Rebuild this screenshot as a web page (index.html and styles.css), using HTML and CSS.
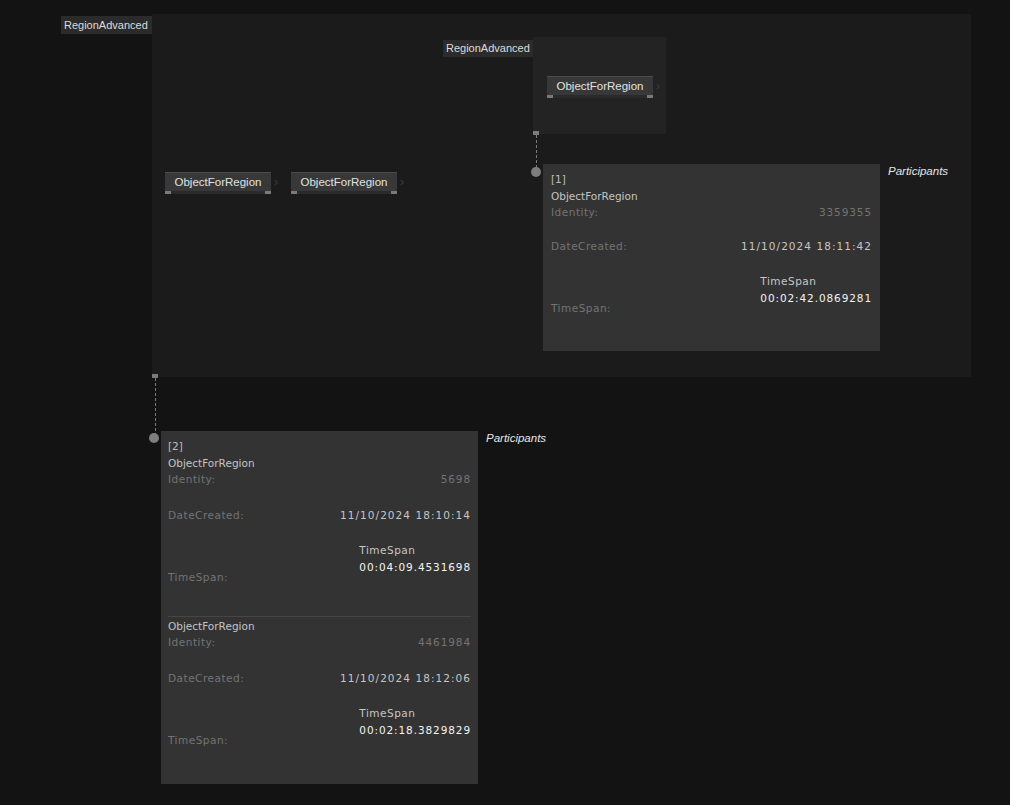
FILE: index.html
```html
<!DOCTYPE html>
<html lang="en">
<head>
    <meta charset="UTF-8">
    <meta name="viewport" content="width=device-width, initial-scale=1.0">
    <title>RegionAdvanced</title>
    <link rel="stylesheet" href="styles.css">
</head>
<body>
    <div class="canvas">
        <!-- outer region -->
        <div class="region region-outer"></div>
        <div class="region-label label-outer">RegionAdvanced</div>

        <!-- inner region -->
        <div class="region region-inner"></div>
        <div class="region-label label-inner">RegionAdvanced</div>

        <div class="node node-a">
            <span class="node-title">ObjectForRegion</span>
            <span class="node-foot"><i></i><i></i></span>
        </div>
        <span class="chevron chev-a">›</span>

        <div class="node node-b">
            <span class="node-title">ObjectForRegion</span>
            <span class="node-foot"><i></i><i></i></span>
        </div>
        <span class="chevron chev-b">›</span>

        <div class="node node-c">
            <span class="node-title">ObjectForRegion</span>
            <span class="node-foot"><i></i><i></i></span>
        </div>
        <span class="chevron chev-c">›</span>

        <!-- wires -->
        <svg class="wires" width="1010" height="805" viewBox="0 0 1010 805">
            <rect x="533" y="131" width="6" height="4" fill="#7a7a7a"/>
            <line x1="536.5" y1="135" x2="536.5" y2="168" stroke="#7a7a7a" stroke-width="1" stroke-dasharray="3 2"/>
            <circle cx="536" cy="172" r="5" fill="#7e7e7e"/>

            <rect x="152" y="374" width="6" height="4" fill="#7a7a7a"/>
            <line x1="155.5" y1="378" x2="155.5" y2="434" stroke="#7a7a7a" stroke-width="1" stroke-dasharray="3 2"/>
            <circle cx="154" cy="438" r="5" fill="#7e7e7e"/>
        </svg>

        <!-- participants 1 -->
        <div class="panel panel-1">
            <div class="record">
                <div class="index">[1]</div>
                <div class="title">ObjectForRegion</div>
                <div class="field">
                    <span class="key">Identity:</span>
                    <span class="val dim">3359355</span>
                </div>
                <div class="field">
                    <span class="key">DateCreated:</span>
                    <span class="val">11/10/2024 18:11:42</span>
                </div>
                <div class="field span-field">
                    <span class="key">TimeSpan:</span>
                    <span class="span-box">
                        <span class="span-type">TimeSpan</span>
                        <span class="span-val">00:02:42.0869281</span>
                    </span>
                </div>
            </div>
        </div>
        <div class="caption cap-1">Participants</div>

        <!-- participants 2 -->
        <div class="panel panel-2">
            <div class="record">
                <div class="index">[2]</div>
                <div class="title">ObjectForRegion</div>
                <div class="field">
                    <span class="key">Identity:</span>
                    <span class="val dim">5698</span>
                </div>
                <div class="field">
                    <span class="key">DateCreated:</span>
                    <span class="val">11/10/2024 18:10:14</span>
                </div>
                <div class="field span-field">
                    <span class="key">TimeSpan:</span>
                    <span class="span-box">
                        <span class="span-type">TimeSpan</span>
                        <span class="span-val">00:04:09.4531698</span>
                    </span>
                </div>
            </div>
            <div class="record">
                <div class="title">ObjectForRegion</div>
                <div class="field">
                    <span class="key">Identity:</span>
                    <span class="val dim">4461984</span>
                </div>
                <div class="field">
                    <span class="key">DateCreated:</span>
                    <span class="val">11/10/2024 18:12:06</span>
                </div>
                <div class="field span-field">
                    <span class="key">TimeSpan:</span>
                    <span class="span-box">
                        <span class="span-type">TimeSpan</span>
                        <span class="span-val">00:02:18.3829829</span>
                    </span>
                </div>
            </div>
        </div>
        <div class="caption cap-2">Participants</div>
    </div>
</body>
</html>
```

FILE: styles.css
```css
body, html {
    margin: 0;
    padding: 0;
    height: 100%;
    overflow: hidden;
    background-color: #131313;
}

.canvas {
    position: relative;
    width: 1010px;
    height: 805px;
    font-family: "Liberation Sans", Arial, sans-serif;
}

/* regions */
.region {
    position: absolute;
}

.region-outer {
    left: 152px;
    top: 14px;
    width: 819px;
    height: 363px;
    background-color: #1b1b1b;
}

.region-inner {
    left: 533px;
    top: 37px;
    width: 133px;
    height: 97px;
    background-color: #232323;
}

.region-label {
    position: absolute;
    height: 17px;
    line-height: 17px;
    padding: 0 3px;
    background-color: #2b2b2b;
    color: #dcdcdc;
    font-size: 11px;
}

.label-outer {
    left: 61px;
    top: 16px;
    width: 85px;
    height: 18px;
    line-height: 18px;
}

.label-inner {
    left: 443px;
    top: 40px;
    width: 84px;
}

/* nodes */
.node {
    position: absolute;
    width: 106px;
    height: 22px;
    box-sizing: border-box;
    display: flex;
    flex-direction: column;
    background-color: #383838;
    border-top: 1px solid #4c4c4c;
}

.node-title {
    flex: 1;
    text-align: center;
    color: #e2e2e2;
    font-size: 11.5px;
    line-height: 18px;
}

.node-foot {
    height: 4px;
    display: flex;
    justify-content: space-between;
    background-color: #2a2a2a;
}

.node-foot i {
    width: 6px;
    background-color: #7a7a7a;
}

.node-a { left: 547px; top: 76px; }
.node-b { left: 165px; top: 172px; }
.node-c { left: 291px; top: 172px; }

.chevron {
    position: absolute;
    color: #3e3e3e;
    font-size: 12px;
    line-height: 14px;
}

.chev-a { left: 656px; top: 79px; }
.chev-b { left: 274px; top: 175px; }
.chev-c { left: 400px; top: 175px; }

.wires {
    position: absolute;
    top: 0;
    left: 0;
    pointer-events: none;
    z-index: 2;
}

/* participant panels */
.panel {
    position: absolute;
    box-sizing: border-box;
    background-color: #333333;
    padding: 7px 8px 5px 8px;
    font-family: "DejaVu Sans", Verdana, sans-serif;
    font-size: 10.5px;
    line-height: 16.5px;
}

.panel-1 {
    left: 543px;
    top: 164px;
    width: 337px;
    height: 187px;
}

.panel-2 {
    left: 161px;
    top: 431px;
    width: 317px;
    height: 353px;
    padding-left: 7px;
    padding-right: 7px;
}

.record {
    display: flex;
    flex-direction: column;
    padding-bottom: 30px;
}

.record + .record {
    border-top: 1px solid #464646;
    padding-top: 1px;
}

.index {
    color: #bdbdbd;
}

.title {
    color: #c4c4c4;
}

.field {
    display: flex;
    justify-content: space-between;
    align-items: flex-start;
}

.field + .field {
    margin-top: 19px;
}

.panel-1 .field + .field {
    margin-top: 17px;
}

.panel-1 .field + .span-field {
    margin-top: 19px;
}

.key {
    color: #747474;
    letter-spacing: 0.5px;
}

.val {
    color: #c6c6c6;
    letter-spacing: 1.05px;
}

.val.dim {
    color: #747474;
    letter-spacing: 0.9px;
}

.span-field .key {
    padding-top: 27px;
}

.span-box {
    display: flex;
    flex-direction: column;
}

.span-type {
    color: #c6c6c6;
    letter-spacing: 0.5px;
}

.span-val {
    color: #f4f4f4;
    letter-spacing: 0.9px;
}

.caption {
    position: absolute;
    color: #e6e6e6;
    font-size: 11.5px;
    font-style: italic;
    line-height: 14px;
}

.cap-1 { left: 888px; top: 164px; }
.cap-2 { left: 486px; top: 431px; }
```
